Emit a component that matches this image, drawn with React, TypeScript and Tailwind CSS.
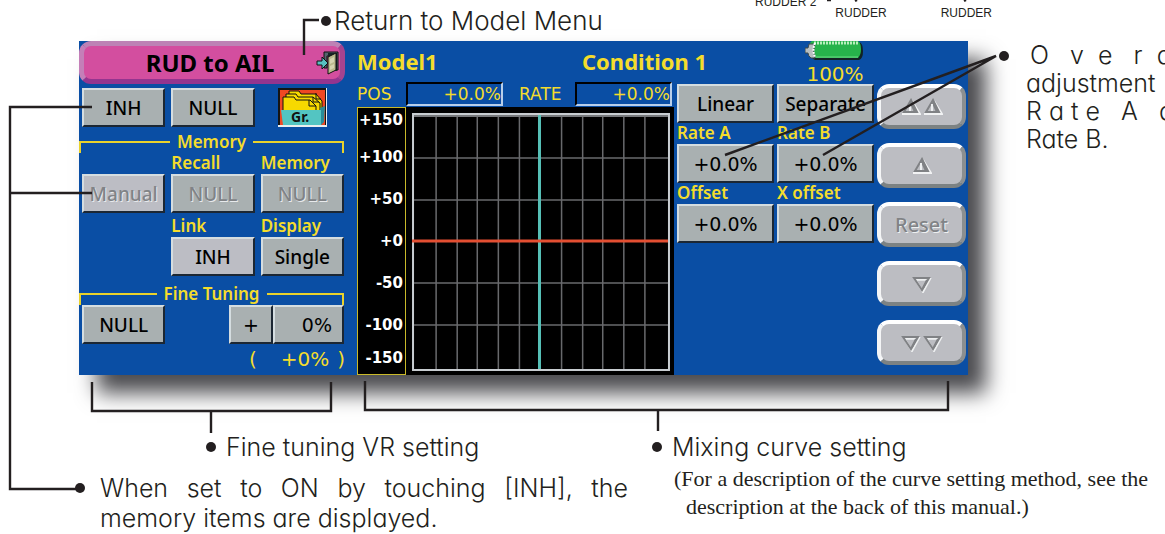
import React from 'react';
import clsx from 'clsx';

type KeyProps = {
  id?: string;
  label: string;
  tone?: 'normal' | 'light';
  disabled?: boolean;
  className?: string;
};

const axis = ['+100', '+50', '+0', '-50', '-100'];

const Key = ({ id, label, tone = 'normal', disabled, className }: KeyProps) => (
  <button
    id={id}
    type="button"
    disabled={disabled}
    className={clsx(
      'block h-[39px] w-full border-2 border-t-[#d5dde0] border-l-[#d5dde0] border-r-[#1c2733] border-b-[#1c2733] text-center text-[19px] leading-[34px] font-medium whitespace-nowrap',
      tone === 'light' ? 'bg-[#bcbdc4]' : 'bg-[#a9b0b1]',
      disabled ? 'text-[#818386] [text-shadow:1px_1px_0_#e8eaec]' : 'text-black',
      className
    )}
  >
    {label}
  </button>
);

const ValueKey = ({ id, label }: { id: string; label: string }) => (
  <div>
    <KeyLabel htmlFor={id}>{label}</KeyLabel>
    <Key id={id} label="+0.0%" className="font-['DejaVu_Sans',sans-serif]" />
  </div>
);

const KeyLabel = ({ htmlFor, children }: { htmlFor: string; children: React.ReactNode }) => (
  <label htmlFor={htmlFor} className="block h-[21px] text-[17px] leading-[20px] font-semibold whitespace-nowrap">
    {children}
  </label>
);

const Legend = ({ children }: { children: React.ReactNode }) => (
  <div className="flex h-[22px] items-end pr-[13px]">
    <div className="h-3 flex-1 border-t-2 border-l-2 border-[#e9d22c]" />
    <h2 className="px-[7px] text-[17px] leading-[22px] font-semibold whitespace-nowrap">{children}</h2>
    <div className="h-3 flex-1 border-t-2 border-r-2 border-[#e9d22c]" />
  </div>
);

const Readout = ({ id, label, className }: { id: string; label: string; className?: string }) => (
  <div className={clsx("flex min-w-0 items-center justify-between font-['DejaVu_Sans',sans-serif] text-[17px] leading-5", className)}>
    <label htmlFor={id}>{label}</label>
    <output
      id={id}
      className="h-6 w-[97px] border-2 border-t-black border-l-black border-r-[#b9cfea] border-b-[#b9cfea] text-right"
    >
      +0.0%
    </output>
  </div>
);

const Arrow = ({ down }: { down?: boolean }) => (
  <svg width="20" height="18" viewBox="0 0 20 18" fill="none">
    {down ? (
      <>
        <path d="M3 4h15L11 17Z" stroke="#eef0f1" strokeWidth="2" />
        <path d="M2 3h15L10 15Z" stroke="#808285" strokeWidth="2" />
        <path d="M5 5h9" stroke="#eef0f1" strokeWidth="1.5" />
        <path d="m11 13 4-8" stroke="#808285" strokeWidth="2" />
      </>
    ) : (
      <>
        <path d="M1 16h18L11 3" stroke="#f2f3f4" strokeWidth="2" />
        <path d="M3 14h13L10 2Z" stroke="#808285" strokeWidth="2" />
        <path d="m10 4 4 9" stroke="#808285" strokeWidth="3" />
        <path d="M9 6v7" stroke="#eef0f1" strokeWidth="2" />
      </>
    )}
  </svg>
);

const SideKey = ({ label, children }: { label: string; children: React.ReactNode }) => (
  <button
    type="button"
    disabled
    aria-label={label}
    className="flex h-[45px] w-full items-center justify-center gap-[2px] rounded-xl border-4 border-t-white border-l-[#f4f5f6] border-r-[#8b8f90] border-b-[#7c8283] bg-[#bcbdc2] text-[20px] font-medium text-[#818386] [text-shadow:1px_1px_0_#eef0f1]"
  >
    {children}
  </button>
);

const ExitIcon = () => (
  <svg width="24" height="24" viewBox="0 0 24 24" aria-hidden="true">
    <path d="M8 1h14v18h-4V5H11v12H8Z" fill="#55656d" stroke="#111" />
    <path d="M12 2h9v18h-9Z" fill="#172528" />
    <path d="m12 6 8-4v17l-8 4Z" fill="#b9b98d" stroke="#111" />
    <path d="m14 8 4-2v5l-4 2Zm0 7 4-2v4l-4 2Z" fill="#d6d5b1" />
    <path d="M1 10h5V6l6 6-6 6v-4H1Z" fill="#57bfc0" stroke="#111" />
  </svg>
);

const GroupIcon = () => (
  <svg viewBox="0 0 49 39" className="h-[39px] w-[49px]">
    <path fill="#e9eef0" d="M0 0h49v39H0z" />
    <path fill="#151515" d="M0 0h48v37H0z" />
    <path fill="#ef4823" d="M2 2h45v35H2z" />
    <g fill="#f7d900" stroke="#111">
      <path d="M11 18V3h10l2 3h15l6 7v11H11Z" />
      <path d="M8 20V6h10l2 3h15l7 6v9H8Z" />
      <path d="M5 24V9h11l2 3h14l6 6v6H5Z" />
      <path d="M31 12v6h7M35 9v5h6M38 5v6h5" fill="none" />
    </g>
    <path d="m42 20 5-2-1 16-3 3Z" fill="#298c99" />
    <path d="M3 22h40v15H5Z" fill="#53c5c2" />
    <text x="13" y="34" fill="#111" className="text-[14px] font-bold">Gr.</text>
  </svg>
);

const Battery = () => (
  <svg width="60" height="20" viewBox="0 0 60 20" aria-hidden="true">
    <path d="M8 1h46q4 1 4 9t-4 9H10q-4-1-4-9t2-9Z" fill="#112323" />
    <path d="M7 0h46q3 2 3 8t-3 9H8q-4-2-4-9t3-8Z" fill="#27b34b" />
    <path d="M9 2h45" stroke="#b9efbd" strokeWidth="3" strokeDasharray="2 1" />
    <path d="M10 16h43" stroke="#6dd985" />
    <path d="M4 3h6q-3 7 0 14H6q-3-2-3-5H0V7h3Z" fill="#b8bec0" stroke="#3a484c" />
    <path d="M10 2q-3 7 0 14" stroke="#fff" strokeWidth="2" strokeDasharray="2 1" fill="none" />
  </svg>
);

const CurvePlot = () => (
  <svg viewBox="0 0 267 268" preserveAspectRatio="none" className="h-[268px] w-full bg-black">
    <path
      d="M30 8V262M51 8V262M71 8V262M92 8V262M113 8V262M155 8V262M176 8V262M196 8V262M217 8V262M238 8V262M8 51H261M8 93H261M8 176H261M8 218H261"
      stroke="#68696c"
      strokeWidth="1.5"
    />
    <path d="M8 9H261" stroke="#77797c" strokeWidth="2" />
    <path d="M7 7H262V263H7Z" fill="none" stroke="#c8cdd1" strokeWidth="2" />
    <path d="M133 8V262" stroke="#56bfb6" strokeWidth="3" />
    <path d="M6 134H261" stroke="#e34f32" strokeWidth="3" />
  </svg>
);

const Bullet = () => <span className="size-[10px] shrink-0 rounded-full bg-[#231f20]" />;

const Callouts = () => (
  <svg
    viewBox="0 0 1165 534"
    preserveAspectRatio="none"
    className="pointer-events-none absolute top-0 left-0 h-[534px] w-full"
    fill="none"
    stroke="#231f20"
    strokeWidth="2.4"
    aria-hidden="true"
  >
    <path d="M319 20H304V55" />
    <path d="M92 107H10V489H76M10 193H92" />
    <path d="M92 382V411H331V382M211 411V433" />
    <path d="M365 381V410H948V381M658 410V431" />
    <path d="M725 155 996 56 823 155" />
    <path d="M827 0h4M855 1l2-1M964 1l2-1" />
  </svg>
);

const MixScreen = () => (
  <main className="grid min-w-0 flex-1 grid-cols-[278fr_611fr] bg-[#0a4ea4] font-['Noto_Sans',sans-serif] text-base font-normal text-[#f4dc2c] shadow-[18px_18px_20px_#4b4b4f]">
    {/* Left side: memory and fine tuning */}
    <section className="min-w-0">
      <div className="pr-3">
        <button
          type="button"
          className="flex h-[43px] w-full items-center justify-end rounded-xl border-[5px] border-t-[#bd82b5] border-l-[#c47fb8] border-r-[#a5438f] border-b-[#94358f] bg-[#d34e9f] text-black"
        >
          <span className="flex-1 pl-5 text-center text-[24px] leading-8 font-bold">RUD to AIL</span>
          <ExitIcon />
        </button>
      </div>
      <div className="grid grid-cols-3 gap-[6px] pt-1 pr-[13px] pl-[3px]">
        <Key label="INH" />
        <Key label="NULL" />
        <button type="button" aria-label="Group" className="justify-self-center">
          <GroupIcon />
        </button>
      </div>

      <div className="pt-1">
        <Legend>Memory</Legend>
        <div className="grid grid-cols-3 items-end gap-x-[6px] pr-[13px] pl-[3px]">
          <Key label="Manual" tone="light" disabled />
          <div>
            <KeyLabel htmlFor="recall">Recall</KeyLabel>
            <Key id="recall" label="NULL" disabled />
          </div>
          <div>
            <KeyLabel htmlFor="memory">Memory</KeyLabel>
            <Key id="memory" label="NULL" disabled />
          </div>
          <div className="col-start-2 pt-[3px]">
            <KeyLabel htmlFor="link">Link</KeyLabel>
            <Key id="link" label="INH" tone="light" />
          </div>
          <div className="pt-[3px]">
            <KeyLabel htmlFor="display">Display</KeyLabel>
            <Key id="display" label="Single" />
          </div>
        </div>
      </div>

      <div className="pt-[7px]">
        <Legend>Fine Tuning</Legend>
        <div className="grid grid-cols-3 gap-x-[6px] pr-[13px] pl-[3px]">
          <Key label="NULL" />
          <div className="col-span-2 flex justify-end font-['DejaVu_Sans',sans-serif]">
            <div className="w-11">
              <Key label="+" />
            </div>
            <div className="w-[71px]">
              <Key label="0%" className="pr-[10px] text-right" />
            </div>
          </div>
        </div>
        <div className="flex h-[31px] justify-end pr-3 font-['DejaVu_Sans',sans-serif] text-[20px] leading-[30px]">
          <span className="pr-6">(</span>
          <span className="pr-2">+0%</span>
          <span>)</span>
        </div>
      </div>
    </section>

    <section className="min-w-0">
      <header className="grid h-[41px] grid-cols-[225fr_223fr_163fr] text-[22px] font-bold whitespace-nowrap">
        <h1 className="leading-[40px]">Model1</h1>
        <span className="leading-[40px]">Condition 1</span>
        <div className="flex w-15 flex-col items-center">
          <Battery />
          <span className="font-['DejaVu_Sans',sans-serif] text-[20px] leading-[26px] font-normal">100%</span>
        </div>
      </header>
      <div className="grid grid-cols-[317fr_294fr]">
        {/* Mixing curve */}
        <div className="min-w-0">
          <div className="flex h-[25px] items-start justify-between pr-[2px]">
            <Readout id="pos" label="POS" className="w-[146px]" />
            <Readout id="rate" label="RATE" className="w-[153px]" />
          </div>
          <div className="flex h-[268px] bg-black">
            <div className="w-[49px] shrink-0 border border-[#c9b929] pr-[2px] text-right font-['DejaVu_Sans',sans-serif] text-[15px] font-bold text-white">
              <div className="h-6 leading-6">+150</div>
              <div className="pt-1">
                {axis.map((value) => (
                  <div key={value} className="h-[42px] leading-[42px]">
                    {value}
                  </div>
                ))}
              </div>
              <div className="h-6 leading-6">-150</div>
            </div>
            <CurvePlot />
          </div>
        </div>

        {/* Rates, offsets and the step keys */}
        <div className="grid min-w-0 grid-cols-[1fr_89px] gap-[3px] pt-[2px] pr-[2px] pl-[3px]">
          <div className="grid grid-cols-2 content-start gap-x-[3px]">
            <Key label="Linear" />
            <Key label="Separate" />
            <ValueKey id="rate-a" label="Rate A" />
            <ValueKey id="rate-b" label="Rate B" />
            <ValueKey id="offset" label="Offset" />
            <ValueKey id="x-offset" label="X offset" />
          </div>
          <div className="flex flex-col gap-[14px]">
            <SideKey label="Fast up"><Arrow /><Arrow /></SideKey>
            <SideKey label="Up"><Arrow /></SideKey>
            <SideKey label="Reset">Reset</SideKey>
            <SideKey label="Down"><Arrow down /></SideKey>
            <SideKey label="Fast down"><Arrow down /><Arrow down /></SideKey>
          </div>
        </div>
      </div>
    </section>
  </main>
);

const App = () => {
  return (
    <div className="relative overflow-hidden bg-white font-['Inter',sans-serif] text-[25px] font-light text-[#231f20] [font-feature-settings:'cv11']">
      <div className="flex h-[41px] justify-between pl-[321px]">
        <p className="flex items-center gap-[3px] text-[26px] whitespace-nowrap">
          <Bullet />
          Return to Model Menu
        </p>
        <div className="flex pr-[173px] font-['Liberation_Sans',sans-serif] text-[12px] leading-4 font-normal">
          <span className="-mt-[6px] pr-[19px]">RUDDER 2</span>
          <span className="pt-[5px] pr-[54px]">RUDDER</span>
          <span className="pt-[5px]">RUDDER</span>
        </div>
      </div>

      <div className="flex pl-[79px]">
        <MixScreen />
        <aside className="flex w-[197px] shrink-0 pl-[31px] whitespace-pre">
          <div className="flex h-[30px] items-center">
            <Bullet />
          </div>
          <div className="pl-[17px] leading-7">
            <p className="pl-1">O   v  e   r  a</p>
            <p>adjustment</p>
            <p>R a t e   A   a</p>
            <p>Rate B.</p>
          </div>
        </aside>
      </div>

      <div className="grid grid-cols-[652fr_513fr] pt-[54px]">
        <div className="pl-[75px]">
          <p className="flex items-center gap-[10px] pl-[131px] leading-[36px]">
            <Bullet />
            Fine tuning VR setting
          </p>
          <div className="flex gap-[15px] pt-2 pr-6 leading-[30px]">
            <span className="flex h-[30px] items-center">
              <Bullet />
            </span>
            <p className="text-justify">When set to ON by touching [INH], the memory items are displayed.</p>
          </div>
        </div>
        <div className="min-w-0">
          <p className="flex items-center gap-[10px] leading-[36px]">
            <Bullet />
            Mixing curve setting
          </p>
          <div className="pl-[22px] font-['Liberation_Serif',serif] text-[22px] leading-7 font-normal whitespace-nowrap">
            <p>(For a description of the curve setting method, see the</p>
            <p className="pl-3">description at the back of this manual.)</p>
          </div>
        </div>
      </div>
      <Callouts />
    </div>
  );
};

export default App;
